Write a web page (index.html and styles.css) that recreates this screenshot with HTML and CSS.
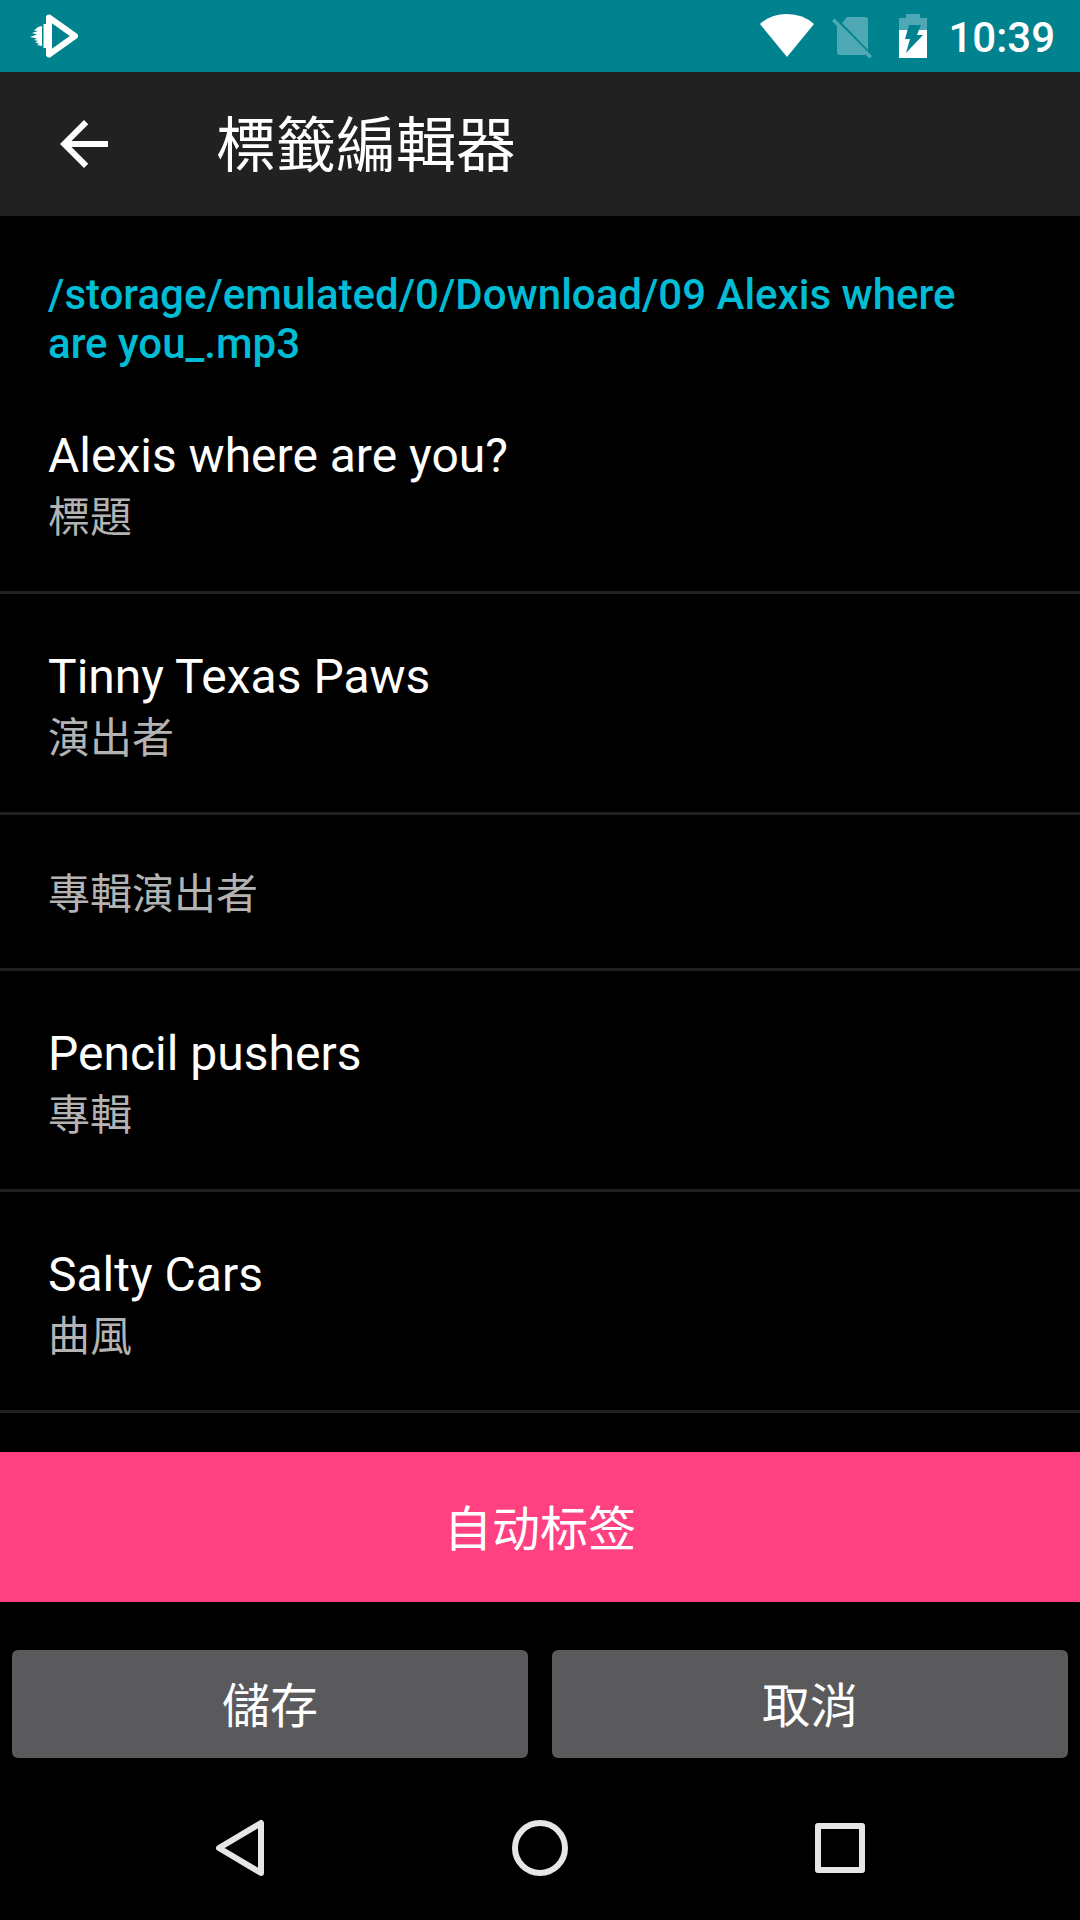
FILE: index.html
```html
<!DOCTYPE html>
<html lang="zh-Hant">
<head>
  <meta charset="utf-8">
  <meta name="viewport" content="width=device-width, initial-scale=1">
  <title>標籤編輯器</title>
  <link rel="stylesheet" href="styles.css">
</head>
<body>
  <div class="screen">
    <div class="status-bar">
      <svg class="status-logo" viewBox="0 0 48 44" aria-hidden="true">
        <path d="M19 3.500 45 22 19 40.500Z" fill="none" stroke="#fff" stroke-width="6" stroke-linejoin="round"/>
        <path d="M13.500 10H18v24h-4.500z" fill="#fff"/>
        <path d="M12 12 8 13 4 16.500 8 17 2 19 7 20.500 0 23 7 24.500 4 26 8 27 5 28.500 9 29.500 7 31 12 32Z" fill="#fff"/>
      </svg>
      <div class="status-icons">
        <svg class="icon-wifi" viewBox="0 0 54 44" aria-hidden="true">
          <path d="M0 10Q11 0 27 0t27 10L27 43Z" fill="#fff"/>
        </svg>
        <svg class="icon-sim" viewBox="0 0 40 44" aria-hidden="true">
          <path d="M15 3h18q3 0 3 3v30L10 9ZM2.500 4.500 40 42l-2.500 2.500-4-4q-1 .5-2 .5H8q-3 0-3-3V12L0 7Z" fill="#4fa9b4"/>
        </svg>
        <svg class="icon-battery" viewBox="0 0 30 44" aria-hidden="true">
          <path d="M8 0h14v4h7v12H1V4h7z" fill="#4fa9b4"/>
          <path d="M1 16h28v28H1z" fill="#fff"/>
          <path d="M11 11h12l-4 10h6L8 39l4-14H7z" fill="#00838f"/>
        </svg>
        <time class="clock">10:39</time>
      </div>
    </div>

    <header class="toolbar">
      <button class="back" type="button" aria-label="返回">
        <svg viewBox="0 0 24 24" aria-hidden="true">
          <path d="M20 11H7.830l5.590-5.590L12 4l-8 8 8 8 1.410-1.410L7.830 13H20z" fill="#fff"/>
        </svg>
      </button>
      <h1 class="title">標籤編輯器</h1>
    </header>

    <main class="content">
      <p class="path">/storage/emulated/0/Download/09 Alexis where are you_.mp3</p>
      <ul class="fields">
        <li><button class="field" type="button"><span class="value">Alexis where are you?</span><span class="label">標題</span></button></li>
        <li><button class="field" type="button"><span class="value">Tinny Texas Paws</span><span class="label">演出者</span></button></li>
        <li><button class="field" type="button"><span class="label">專輯演出者</span></button></li>
        <li><button class="field" type="button"><span class="value">Pencil pushers</span><span class="label">專輯</span></button></li>
        <li><button class="field" type="button"><span class="value">Salty Cars</span><span class="label">曲風</span></button></li>
      </ul>
    </main>

    <button class="auto-tag" type="button">自动标签</button>
    <div class="actions">
      <button class="action" type="button">儲存</button>
      <button class="action" type="button">取消</button>
    </div>

    <nav class="nav-bar">
      <button class="nav-button" type="button" aria-label="返回">
        <svg viewBox="0 0 60 60" aria-hidden="true"><path d="M51 5v50L9 30Z"/></svg>
      </button>
      <button class="nav-button" type="button" aria-label="主畫面">
        <svg viewBox="0 0 60 60" aria-hidden="true"><circle cx="30" cy="30" r="25"/></svg>
      </button>
      <button class="nav-button" type="button" aria-label="概覽">
        <svg viewBox="0 0 60 60" aria-hidden="true"><path d="M8 8h44v44H8z"/></svg>
      </button>
    </nav>
  </div>
</body>
</html>
```
FILE: styles.css
```css
* {
  box-sizing: border-box;
}

body {
  margin: 0;
  background: #000;
  color: #fff;
  font-family: Roboto, "Noto Sans CJK TC", sans-serif;
}

button {
  margin: 0;
  padding: 0;
  border: 0;
  background: none;
  color: inherit;
  font: inherit;
}

svg {
  display: block;
}

.screen {
  display: flex;
  flex-direction: column;
  min-height: 100vh;
}

/* System status bar */
.status-bar {
  display: flex;
  align-items: center;
  justify-content: space-between;
  height: 72px;
  padding: 0 25px 0 30px;
  background: #00838f;
}

.status-logo {
  width: 48px;
  height: 44px;
}

.status-icons {
  display: flex;
  align-items: center;
}

.icon-wifi {
  width: 54px;
  height: 44px;
  margin-right: 18px;
}

.icon-sim {
  width: 40px;
  height: 44px;
  margin-right: 26px;
}

.icon-battery {
  width: 30px;
  height: 44px;
  margin-right: 20px;
}

.clock {
  padding-top: 3px;
  font-size: 42px;
  font-weight: 500;
  line-height: 48px;
}

/* App toolbar */
.toolbar {
  display: flex;
  align-items: center;
  gap: 96px;
  height: 144px;
  padding: 0 48px;
  background: #212121;
}

.back,
.back svg {
  width: 72px;
  height: 72px;
}

.title {
  margin: 0;
  padding-top: 6px;
  font-size: 60px;
  font-weight: 400;
  line-height: 72px;
}

/* Tag fields */
.content {
  flex: 1;
}

.path {
  margin: 0;
  padding: 54px 96px 5px 48px;
  color: #00bcd4;
  font-size: 42px;
  font-weight: 500;
  line-height: 49px;
}

.fields {
  margin: 0;
  padding: 0;
  list-style: none;
}

.field {
  display: flex;
  flex-direction: column;
  width: 100%;
  padding: 50px 48px 44px;
  border-bottom: 3px solid #212121;
  text-align: left;
}

.value {
  font-size: 48px;
  line-height: 65px;
}

.label {
  color: #b3b3b3;
  font-size: 42px;
  line-height: 59px;
}

/* Bottom actions */
.auto-tag {
  height: 150px;
  padding-bottom: 4px;
  background: #ff4081;
  font-size: 48px;
}

.actions {
  display: grid;
  grid-template-columns: 1fr 1fr;
  gap: 24px;
  padding: 48px 12px 18px;
}

.action {
  height: 108px;
  padding-bottom: 4px;
  border-radius: 6px;
  background: #5a5a5c;
  font-size: 48px;
}

/* System navigation bar */
.nav-bar {
  display: flex;
  align-items: center;
  justify-content: center;
  gap: 60px;
  height: 144px;
}

.nav-button {
  display: flex;
  justify-content: center;
  width: 240px;
}

.nav-button svg {
  width: 60px;
  height: 60px;
  fill: none;
  stroke: #e6e6e6;
  stroke-width: 6;
  stroke-linejoin: round;
}
```
